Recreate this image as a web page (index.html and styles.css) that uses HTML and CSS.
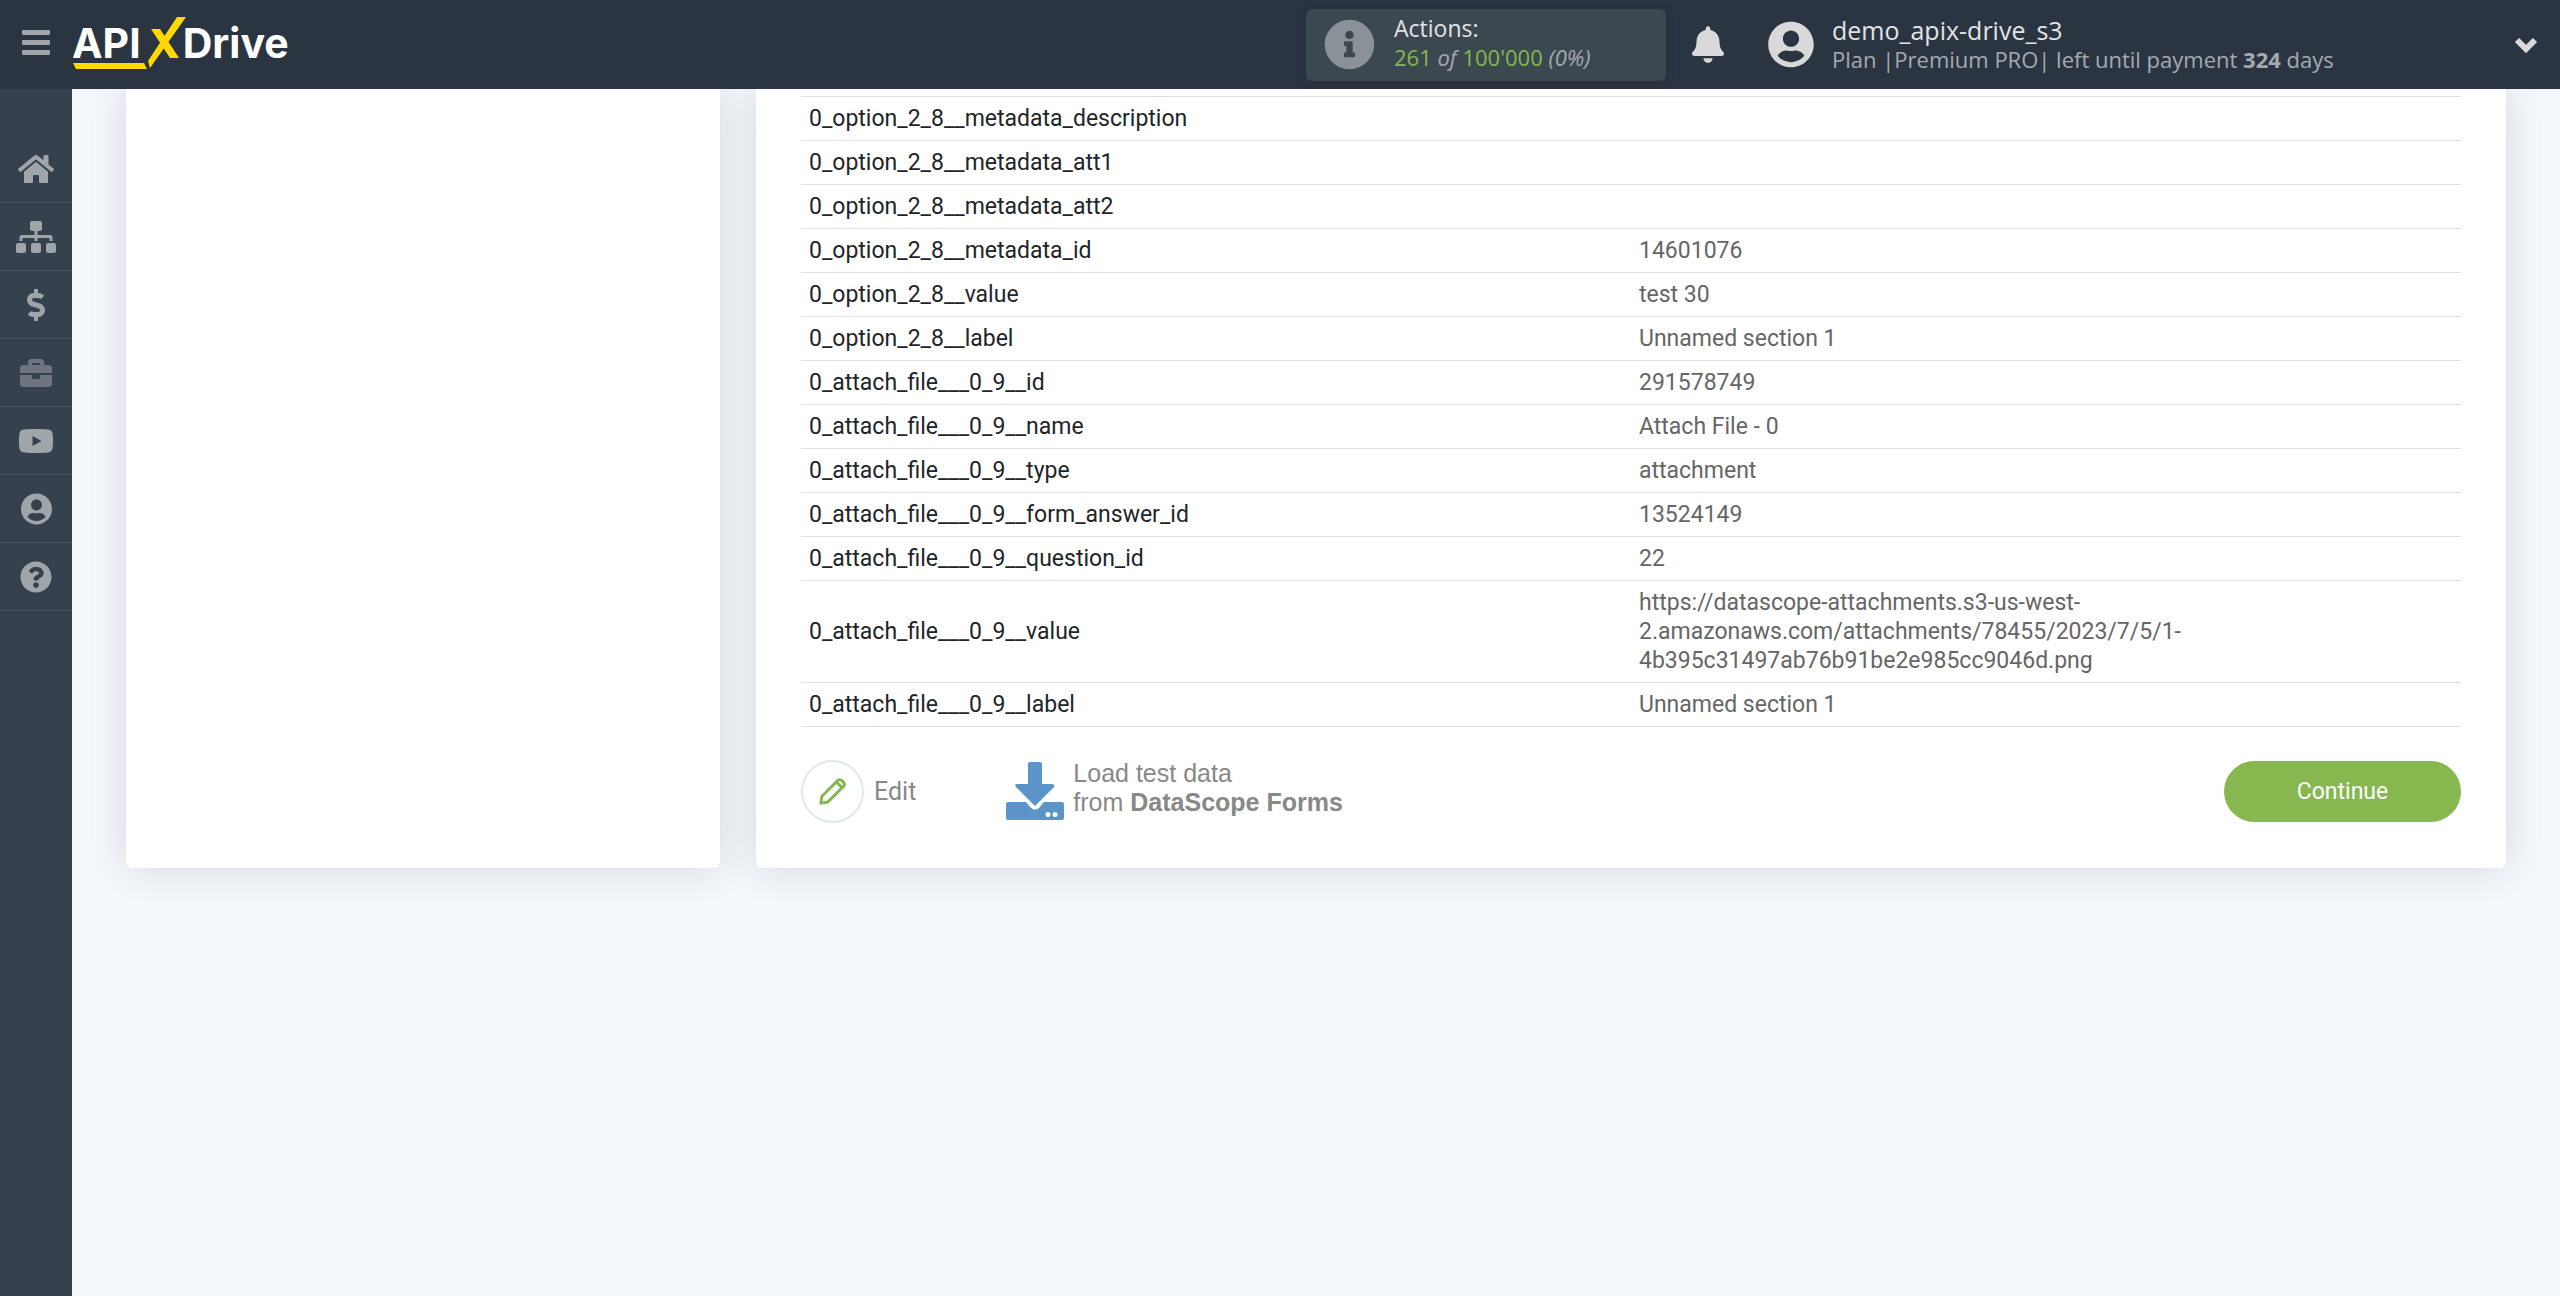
FILE: index.html
```html
<!DOCTYPE html>
<html lang="en">
<head>
<meta charset="utf-8">
<title>ApiX-Drive</title>
<link rel="stylesheet" href="styles.css">
</head>
<body>
<header class="topbar">
  <button class="menu-button" type="button" aria-label="Menu"><span></span><span></span><span></span></button>
  <a class="logo" href="#">
    <span class="logo-word">API</span>
    <svg class="logo-mark" viewBox="0 0 114 54" aria-hidden="true"><path d="M0 46h71l3 6H3zM104 0h9L77 51l-2-7zM78 12h9l19 29h-9z"/></svg>
    <span class="logo-word">Drive</span>
  </a>
  <div class="actions">
    <svg class="actions-icon" viewBox="0 0 512 512" aria-hidden="true"><path d="M256 8C119 8 8 119.100 8 256c0 137 111 248 248 248s248-111 248-248C504 119.100 393 8 256 8zm0 110c23.200 0 42 18.800 42 42s-18.800 42-42 42-42-18.800-42-42 18.800-42 42-42zm56 254c0 6.600-5.400 12-12 12h-88c-6.600 0-12-5.400-12-12v-24c0-6.600 5.400-12 12-12h12v-64h-12c-6.600 0-12-5.400-12-12v-24c0-6.600 5.400-12 12-12h64c6.600 0 12 5.400 12 12v100h12c6.600 0 12 5.400 12 12z"/></svg>
    <div class="actions-text">
      <div class="actions-title">Actions:</div>
      <div class="line-sub"><b>261</b> <i>of</i> <b>100'000</b> <i>(0%)</i></div>
    </div>
  </div>
  <button class="bell" type="button" aria-label="Notifications"><svg viewBox="0 0 448 512" aria-hidden="true"><path d="M224 512c35.300 0 64-28.700 64-64H160c0 35.300 28.600 64 64 64zm215.400-149.700c-19.300-20.800-55.500-52-55.500-154.300 0-77.700-54.500-139.900-127.900-155.200V32c0-17.700-14.300-32-32-32s-32 14.300-32 32v20.800C118.600 68.100 64.100 130.300 64.100 208c0 102.300-36.200 133.500-55.500 154.300-6 6.400-8.700 14.100-8.600 21.700.1 16.400 13 32 32.100 32h383.800c19.100 0 32-15.600 32.100-32 .1-7.600-2.600-15.300-8.600-21.700z"/></svg></button>
  <div class="account">
    <svg class="account-icon" viewBox="0 0 496 512" aria-hidden="true"><path d="M248 8C111 8 0 119 0 256s111 248 248 248 248-111 248-248S385 8 248 8zm0 96c48.600 0 88 39.400 88 88s-39.400 88-88 88-88-39.400-88-88 39.400-88 88-88zm0 344c-58.700 0-111.300-26.600-146.500-68.200 18.800-35.400 55.600-59.800 98.500-59.800 2.400 0 4.800.4 7.100 1.100 13 4.200 26.600 6.900 40.900 6.900 14.300 0 28-2.700 40.900-6.900 2.300-.7 4.700-1.100 7.100-1.100 42.900 0 79.700 24.400 98.500 59.800C359.300 421.400 306.700 448 248 448z"/></svg>
    <div>
      <div class="account-name">demo_apix-drive_s3</div>
      <div class="line-sub">Plan |Premium PRO| left until payment <strong>324</strong> days</div>
    </div>
  </div>
  <button class="expand" type="button" aria-label="Account menu"><svg viewBox="0 0 24 16" aria-hidden="true"><path d="M3 3l9 9 9-9" fill="none" stroke="currentColor" stroke-width="6"/></svg></button>
</header>
<div class="shell">
  <nav class="sidebar" aria-label="Main">
    <a href="#" aria-label="Home"><svg width="36" height="32" viewBox="0 0 576 512"><path d="M280.400 148.300 96 300.100V464a16 16 0 0 0 16 16h112a16 16 0 0 0 16-16v-96a16 16 0 0 1 16-16h64a16 16 0 0 1 16 16v96a16 16 0 0 0 16 16h112a16 16 0 0 0 16-16V300L295.700 148.300a12.200 12.200 0 0 0-15.300 0zM571.600 251.500 488 182.600V44a12 12 0 0 0-12-12h-56a12 12 0 0 0-12 12v72.600L318.500 43a48 48 0 0 0-61 0L4.300 251.500a12 12 0 0 0-1.600 16.900l25.500 31a12 12 0 0 0 16.900 1.600l235.200-193.700a12.200 12.200 0 0 1 15.300 0L530.900 301a12 12 0 0 0 16.900-1.600l25.500-31a12 12 0 0 0-1.700-16.900z"/></svg></a>
    <a href="#" aria-label="Connections"><svg width="40" height="32" viewBox="0 0 640 512"><path d="M128 352H32c-17.700 0-32 14.300-32 32v96c0 17.700 14.300 32 32 32h96c17.700 0 32-14.300 32-32v-96c0-17.700-14.300-32-32-32zm-24-80h192v48h48v-48h192v48h48v-57.600c0-21.200-17.200-38.400-38.400-38.400H344v-64h40c17.700 0 32-14.300 32-32V32c0-17.700-14.300-32-32-32H256c-17.700 0-32 14.300-32 32v96c0 17.700 14.300 32 32 32h40v64H94.400C73.200 224 56 241.200 56 262.400V320h48v-48zm264 80h-96c-17.700 0-32 14.300-32 32v96c0 17.700 14.300 32 32 32h96c17.700 0 32-14.300 32-32v-96c0-17.700-14.300-32-32-32zm240 0h-96c-17.700 0-32 14.300-32 32v96c0 17.700 14.300 32 32 32h96c17.700 0 32-14.300 32-32v-96c0-17.700-14.300-32-32-32z"/></svg></a>
    <a href="#" aria-label="Billing"><svg width="18" height="32" viewBox="0 0 288 512"><path d="M209.200 233.400l-108-31.600C88.700 198.200 80 186.500 80 173.500c0-16.300 13.200-29.500 29.500-29.500h66.300c12.200 0 24.200 3.700 34.200 10.500 6.100 4.100 14.300 3.100 19.500-2l34.800-34c7.100-6.900 6.100-18.400-1.800-24.500C238 74.800 207.400 64.100 176 64V16c0-8.800-7.200-16-16-16h-32c-8.800 0-16 7.200-16 16v48h-2.500C45.800 64-5.400 118.700.5 183.600c4.200 46.100 39.400 83.600 83.800 96.600l102.500 30c12.500 3.700 21.200 15.300 21.200 28.300 0 16.300-13.200 29.500-29.500 29.500h-66.300C100 368 88 364.300 78 357.500c-6.100-4.100-14.300-3.100-19.500 2l-34.800 34c-7.100 6.900-6.100 18.400 1.800 24.500 24.500 19.200 55.100 29.900 86.500 30v48c0 8.800 7.200 16 16 16h32c8.800 0 16-7.200 16-16v-48.200c46.600-.9 90.300-28.600 105.700-72.700 21.500-61.600-14.600-124.800-72.500-141.700z"/></svg></a>
    <a class="dim" href="#" aria-label="Services"><svg width="32" height="32" viewBox="0 0 512 512"><path d="M320 336c0 8.800-7.200 16-16 16h-96c-8.800 0-16-7.200-16-16v-48H0v144c0 25.600 22.400 48 48 48h416c25.600 0 48-22.400 48-48V288H320v48zm144-208h-80V80c0-25.600-22.400-48-48-48H176c-25.600 0-48 22.400-48 48v48H48c-25.600 0-48 22.400-48 48v80h512v-80c0-25.600-22.400-48-48-48zm-144 0H192V96h128v32z"/></svg></a>
    <a href="#" aria-label="Video"><svg width="36" height="32" viewBox="0 0 576 512"><path d="M549.700 124.100c-6.300-23.700-24.800-42.300-48.300-48.600C458.800 64 288 64 288 64S117.200 64 74.600 75.500c-23.500 6.300-42 24.900-48.300 48.600C14.900 167 14.900 256.400 14.900 256.400s0 89.400 11.400 132.300c6.300 23.700 24.800 41.500 48.300 47.800C117.200 448 288 448 288 448s170.800 0 213.400-11.500c23.500-6.300 42-24.200 48.300-47.800 11.400-42.900 11.400-132.300 11.400-132.300s0-89.400-11.400-132.300zM232.100 337.600V175.200l142.700 81.200-142.700 81.200z"/></svg></a>
    <a href="#" aria-label="Profile"><svg width="31" height="32" viewBox="0 0 496 512"><path d="M248 8C111 8 0 119 0 256s111 248 248 248 248-111 248-248S385 8 248 8zm0 96c48.600 0 88 39.400 88 88s-39.400 88-88 88-88-39.400-88-88 39.400-88 88-88zm0 344c-58.700 0-111.300-26.600-146.500-68.200 18.800-35.400 55.600-59.800 98.500-59.800 2.400 0 4.800.4 7.100 1.100 13 4.200 26.600 6.900 40.900 6.900 14.300 0 28-2.700 40.900-6.900 2.300-.7 4.700-1.100 7.100-1.100 42.900 0 79.700 24.400 98.500 59.800C359.300 421.400 306.700 448 248 448z"/></svg></a>
    <a href="#" aria-label="Help"><svg width="32" height="32" viewBox="0 0 512 512"><path d="M504 256c0 137-111 248-248 248S8 393 8 256C8 119.100 119 8 256 8s248 111.100 248 248zM262.700 90c-54.500 0-89.300 23-116.500 63.800-3.500 5.300-2.400 12.400 2.700 16.300l34.700 26.300c5.200 3.900 12.600 3 16.700-2.100 17.900-22.700 30.100-35.800 57.300-35.800 20.400 0 45.700 13.100 45.700 33 0 15-12.400 22.700-32.500 34C247.100 238.500 216 254.900 216 296v4c0 6.600 5.400 12 12 12h56c6.600 0 12-5.400 12-12v-1.300c0-28.500 83.200-29.600 83.200-106.700 0-58-60.200-102-116.500-102zM256 338c-25.400 0-46 20.600-46 46 0 25.400 20.600 46 46 46s46-20.600 46-46c0-25.400-20.600-46-46-46z"/></svg></a>
  </nav>
  <main class="content">
    <section class="card side-card"></section>
    <section class="card main-card">
      <table class="fields">
        <tbody>
        <tr><th scope="row">0_option_2_8__metadata_description</th><td></td></tr>
        <tr><th scope="row">0_option_2_8__metadata_att1</th><td></td></tr>
        <tr><th scope="row">0_option_2_8__metadata_att2</th><td></td></tr>
        <tr><th scope="row">0_option_2_8__metadata_id</th><td>14601076</td></tr>
        <tr><th scope="row">0_option_2_8__value</th><td>test 30</td></tr>
        <tr><th scope="row">0_option_2_8__label</th><td>Unnamed section 1</td></tr>
        <tr><th scope="row">0_attach_file___0_9__id</th><td>291578749</td></tr>
        <tr><th scope="row">0_attach_file___0_9__name</th><td>Attach File - 0</td></tr>
        <tr><th scope="row">0_attach_file___0_9__type</th><td>attachment</td></tr>
        <tr><th scope="row">0_attach_file___0_9__form_answer_id</th><td>13524149</td></tr>
        <tr><th scope="row">0_attach_file___0_9__question_id</th><td>22</td></tr>
        <tr><th scope="row">0_attach_file___0_9__value</th><td>https://datascope-attachments.s3-us-west-<br>2.amazonaws.com/attachments/78455/2023/7/5/1-<br>4b395c31497ab76b91be2e985cc9046d.png</td></tr>
        <tr><th scope="row">0_attach_file___0_9__label</th><td>Unnamed section 1</td></tr>
        </tbody>
      </table>
      <div class="card-actions">
        <button class="edit" type="button"><span class="edit-ring"><svg viewBox="0 0 28 28" aria-hidden="true"><path d="M2 26l1-7L18 4l6 6L9 25zM18 4l2-2q2-1 4 1l1 1q2 2 1 4l-2 2"/></svg></span>Edit</button>
        <button class="load" type="button"><svg viewBox="0 0 58 58" aria-hidden="true"><path d="M24 0h10q2 0 2 2v20h10q3 0 2 3L31 42q-2 3-4 0L10 25q-2-3 1-3h11V2q0-2 2-2z"/><path fill-rule="evenodd" d="M2 40h18l5 6q4 3 8 0l5-6h18q2 0 2 2v14q0 2-2 2H2q-2 0-2-2V42q0-2 2-2zM42 50a2.500 2.500 0 1 0 0 5 2.500 2.500 0 0 0 0-5zm7 0a2.500 2.500 0 1 0 0 5 2.500 2.500 0 0 0 0-5z"/></svg><span class="load-text">Load test data<br>from <strong>DataScope Forms</strong></span></button>
        <button class="continue" type="button">Continue</button>
      </div>
    </section>
  </main>
</div>
</body>
</html>
```
FILE: styles.css
```css
* { box-sizing: border-box; }

body {
  margin: 0;
  min-height: 100vh;
  display: flex;
  flex-direction: column;
  background: #f3f6fb;
  font-family: Roboto, sans-serif;
  font-size: 23px;
  line-height: 29px;
}

button {
  padding: 0;
  border: 0;
  background: none;
  font: inherit;
  color: inherit;
  text-align: left;
  cursor: pointer;
}

a { color: inherit; text-decoration: none; }
svg { display: block; fill: currentColor; }

.topbar {
  display: flex;
  align-items: center;
  height: 89px;
  padding-right: 22px;
  background: #2b3541;
  color: #d9d9d9;
  font-family: "Open Sans", sans-serif;
  position: relative;
  z-index: 1;
}

.menu-button {
  display: grid;
  gap: 5px;
  width: 72px;
  margin-bottom: 4px;
  padding: 0 22px;
}
.menu-button span {
  height: 5px;
  border-radius: 1px;
  background: #9fa5ab;
}

.logo {
  position: relative;
  display: flex;
  gap: 42px;
  margin-bottom: 4px;
  color: #fff;
  font: 700 41px/40px Inter, sans-serif;
}
.logo-mark {
  position: absolute;
  left: 1px;
  top: -6px;
  width: 114px;
  height: 54px;
  fill: #ffd900;
}

.actions {
  display: flex;
  align-items: center;
  gap: 19px;
  width: 360px;
  height: 72px;
  margin-left: auto;
  padding-left: 18px;
  border-radius: 6px;
  background: #3b4850;
  box-shadow: 0 0 8px rgba(0, 0, 0, .15);
}
.actions-icon { width: 51px; height: 51px; color: #8a9198; }
.actions-text { padding-bottom: 6px; }
.actions b { font-weight: 400; color: #84b84f; }

.actions-title { font-size: 23px; line-height: 30px; color: #e3e3e3; }
.account-name { font-size: 25px; line-height: 29px; color: #e3e3e3; }
.line-sub { font-size: 22px; line-height: 28px; color: #a5aab0; }

.bell { margin-left: 26px; }
.bell svg { width: 32px; height: 37px; }

.account {
  display: flex;
  align-items: center;
  gap: 18px;
  width: 746px;
  margin-left: 44px;
}
.account-icon { width: 46px; height: 47px; }
.expand svg { width: 24px; height: 16px; }

.shell { display: flex; flex: 1; }

.sidebar {
  width: 72px;
  padding-top: 46px;
  background: #36414e;
  color: #a0a5aa;
}
.sidebar a {
  display: grid;
  place-items: center;
  height: 68px;
  border-bottom: 1px solid #4a5560;
}
.dim { color: #6d757f; }

.content {
  display: grid;
  grid-template-columns: 594fr 1750fr;
  gap: 36px;
  align-items: stretch;
  align-self: flex-start;
  flex: 1;
  padding: 0 54px;
}

.card {
  background: #fff;
  border-radius: 0 0 6px 6px;
  box-shadow: 0 0 40px rgba(0, 0, 0, .12);
}
.main-card { padding: 7px 45px 45px; }

.fields {
  width: 100%;
  border-collapse: collapse;
  table-layout: fixed;
  border-top: 1px solid #dedfe0;
}
.fields th, .fields td {
  padding: 7px 8px;
  border-bottom: 1px solid #dedfe0;
  text-align: left;
  vertical-align: middle;
  height: 44px;
}
.fields th { font-weight: 400; color: #212529; }
.fields td { color: #666; }

.card-actions {
  display: flex;
  align-items: center;
  margin-top: 32px;
  color: #888;
}
.edit { display: flex; align-items: center; gap: 10px; font-size: 25px; }
.edit-ring {
  display: grid;
  place-items: center;
  width: 63px;
  height: 63px;
  border: 2px solid #e0eae9;
  border-radius: 50%;
}
.edit svg { width: 27px; height: 27px; fill: none; stroke: #84b84f; stroke-width: 3; }
.load {
  display: flex;
  align-items: center;
  gap: 9px;
  margin-left: 90px;
  font-family: "Liberation Sans", Arial, sans-serif;
  font-size: 25px;
}
.load svg { width: 58px; height: 58px; color: #5b94c8; }
.load-text { padding-bottom: 6px; }
.continue {
  width: 237px;
  height: 61px;
  margin-left: auto;
  border-radius: 31px;
  background: #86b84f;
  color: #fff;
  text-align: center;
}
```
